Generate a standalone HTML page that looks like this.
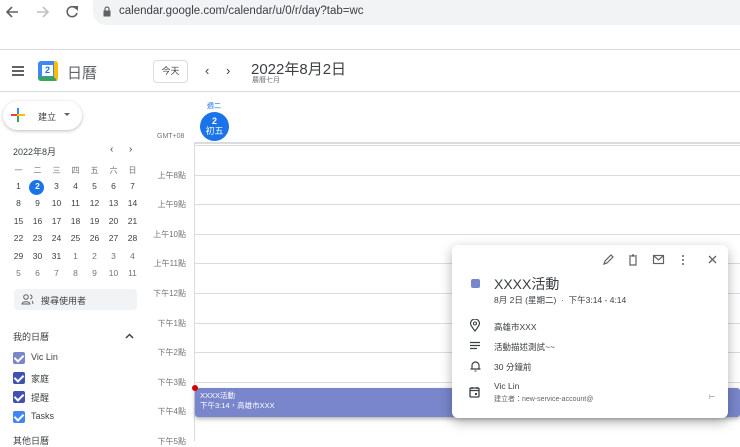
<!DOCTYPE html>
<html><head><meta charset="utf-8"><style>
*{margin:0;padding:0;box-sizing:border-box}
body{width:740px;height:441px;overflow:hidden;background:#fff;font-family:"Liberation Sans","Noto Sans CJK TC",sans-serif;color:#3c4043;position:relative}
.a{position:absolute;white-space:nowrap}
.hl{position:absolute;left:195px;right:0;height:1px;background:#dadce0}
.tl{position:absolute;width:36px;left:150px;text-align:right;font-size:8px;color:#70757a}
.mc{position:absolute;width:19px;text-align:center;font-size:8.5px;color:#3c4043}
.cb{position:absolute;left:13px;width:12px;height:12px;border-radius:2px}
.cb:after{content:"";position:absolute;left:3px;top:1px;width:4px;height:7px;border:solid #fff;border-width:0 2px 2px 0;transform:rotate(45deg)}
</style></head><body>
<!-- browser bar -->
<div class="a" style="left:0;top:0;width:740px;height:50px;background:#fff;border-bottom:1px solid #dadce0"></div>
<svg class="a" style="left:4px;top:4px" width="80" height="16" viewBox="0 0 80 16"><path d="M14 8H3M8 3L3 8l5 5" stroke="#5f6368" stroke-width="1.6" fill="none"/><path d="M33 8h11M39 3l5 5-5 5" stroke="#bdc1c6" stroke-width="1.6" fill="none"/><path d="M72 4.5A5 5 0 1 0 73 9" stroke="#5f6368" stroke-width="1.6" fill="none"/><path d="M69 2h5v5z" fill="#5f6368"/></svg>
<div class="a" style="left:93px;top:0;width:660px;height:25px;background:#f1f3f4;border-radius:0 0 0 13px"></div>
<svg class="a" style="left:103px;top:6px" width="8" height="11"><rect x="0.5" y="4.5" width="7" height="6" fill="#5f6368"/><path d="M2 5V3a2 2 0 0 1 4 0v2" stroke="#5f6368" fill="none" stroke-width="1.2"/></svg>
<div class="a" style="left:119px;top:5px;font-size:11.5px;color:#3c4043">calendar.google.com/calendar/u/0/r/day?tab=wc</div>
<!-- header -->
<div class="a" style="left:0;top:91px;width:740px;height:1px;background:#dadce0"></div>
<div class="a" style="left:12px;top:66px;width:12px;height:1.5px;background:#5f6368;box-shadow:0 4px 0 #5f6368,0 8px 0 #5f6368"></div>
<div class="a" style="left:38px;top:61px;width:20px;height:20px;border-radius:3px;background:#4285f4;border-right:4px solid #fbbc04;border-bottom:4px solid #34a853"></div>
<div class="a" style="left:42px;top:65px;width:11px;height:11px;background:#fff;font-size:9px;color:#1a73e8;text-align:center;line-height:11px;font-weight:bold">2</div>
<div class="a" style="left:67px;top:62px;font-size:15px;color:#5f6368">日曆</div>
<div class="a" style="left:153px;top:60px;width:35px;height:23px;border:1px solid #dadce0;border-radius:4px;font-size:9px;text-align:center;line-height:21px">今天</div>
<div class="a" style="left:205px;top:63px;font-size:13px;color:#3c4043">‹</div>
<div class="a" style="left:226px;top:63px;font-size:13px;color:#3c4043">›</div>
<div class="a" style="left:251px;top:58px;font-size:15px;color:#3c4043">2022年8月2日</div>
<div class="a" style="left:252px;top:75px;font-size:7px;color:#70757a">農曆七月</div>
<!-- create -->
<div class="a" style="left:3px;top:101px;width:79px;height:29px;border-radius:15px;background:#fff;box-shadow:0 1px 3px rgba(60,64,67,.35)"></div>
<div class="a" style="left:11px;top:114px;width:14px;height:2px;background:#ea4335"></div>
<div class="a" style="left:17px;top:108px;width:2px;height:14px;background:#4285f4"></div>
<div class="a" style="left:17px;top:114px;width:8px;height:2px;background:#fbbc04"></div>
<div class="a" style="left:17px;top:116px;width:2px;height:6px;background:#34a853"></div>
<div class="a" style="left:38px;top:110px;font-size:9px">建立</div>
<div class="a" style="left:64px;top:113px;border:3px solid transparent;border-top:3.5px solid #5f6368"></div>
<!-- mini cal -->
<div class="a" style="left:13px;top:145px;font-size:9px">2022年8月</div>
<div class="a" style="left:110px;top:144px;font-size:10px">‹</div>
<div class="a" style="left:129px;top:144px;font-size:10px">›</div>
<div class="a" style="left:29px;top:180px;width:15px;height:15px;border-radius:50%;background:#1a73e8"></div>
<div id="mini"></div>
<!-- search -->
<div class="a" style="left:14px;top:289px;width:123px;height:21px;background:#f1f3f4;border-radius:4px"></div>
<svg class="a" style="left:21px;top:294px" width="13" height="11"><circle cx="5" cy="3" r="2.3" stroke="#5f6368" fill="none"/><path d="M1 10c0-3 8-3 8 0z" stroke="#5f6368" fill="none"/><path d="M9 1a2 2 0 0 1 0 4M11 7c1 1 1 2 1 3" stroke="#5f6368" fill="none"/></svg>
<div class="a" style="left:41px;top:294px;font-size:9px">搜尋使用者</div>
<div class="a" style="left:13px;top:330px;font-size:9px">我的日曆</div>
<svg class="a" style="left:125px;top:333px" width="9" height="6"><path d="M1 5l3.5-3.5L8 5" stroke="#3c4043" stroke-width="1.5" fill="none"/></svg>
<div class="cb" style="top:352px;background:#7986cb"></div><div class="a" style="left:31px;top:352px;font-size:9px">Vic Lin</div>
<div class="cb" style="top:372px;background:#3f51b5"></div><div class="a" style="left:31px;top:372px;font-size:9px">家庭</div>
<div class="cb" style="top:391px;background:#3f51b5"></div><div class="a" style="left:31px;top:391px;font-size:9px">提醒</div>
<div class="cb" style="top:411px;background:#4285f4"></div><div class="a" style="left:31px;top:411px;font-size:9px">Tasks</div>
<div class="a" style="left:13px;top:434px;font-size:9px">其他日曆</div>
<!-- day header -->
<div class="a" style="left:207px;top:101px;font-size:7px;color:#1a73e8">週二</div>
<div class="a" style="left:200px;top:112px;width:29px;height:29px;border-radius:50%;background:#1a73e8;color:#fff;text-align:center;font-size:9px;line-height:10px;padding-top:4px"><b>2</b><br>初五</div>
<div class="a" style="left:157px;top:133px;font-size:7px;color:#70757a">GMT+08</div>
<div class="a" style="left:194px;top:142px;width:546px;height:2px;background:#dadce0"></div>
<div class="a" style="left:194px;top:144px;width:1px;height:297px;background:#dadce0"></div>
<div id="grid"></div>
<!-- event -->
<div class="a" style="left:195px;top:388px;width:545px;height:29px;background:#7986cb;border-radius:3px;box-shadow:0 2px 4px rgba(0,0,0,.3)"></div>
<div class="a" style="left:192px;top:385px;width:6px;height:6px;border-radius:50%;background:#d50000"></div>
<div class="a" style="left:200px;top:390px;font-size:7.5px;color:#fff">XXXX活動</div>
<div class="a" style="left:200px;top:400px;font-size:7.5px;color:#fff">下午3:14，高雄市XXX</div>
<!-- popup -->
<div class="a" style="left:452px;top:245px;width:276px;height:173px;background:#fff;border-radius:6px;box-shadow:0 4px 12px rgba(0,0,0,.3)"></div>
<svg class="a" style="left:602px;top:253px" width="120" height="14" viewBox="0 0 120 14"><path d="M2 11l1-3 6-6 2 2-6 6z" stroke="#5f6368" fill="none" stroke-width="1.2"/><path d="M27 3h8M30 2h2M28 4v8h6V4" stroke="#5f6368" fill="none" stroke-width="1.2"/><rect x="51.5" y="2.5" width="10" height="8" stroke="#5f6368" fill="none" stroke-width="1.2"/><path d="M52 3l4.5 4L61 3" stroke="#5f6368" fill="none" stroke-width="1.2"/><circle cx="81" cy="3" r="1" fill="#5f6368"/><circle cx="81" cy="7" r="1" fill="#5f6368"/><circle cx="81" cy="11" r="1" fill="#5f6368"/><path d="M107 3l7 7M114 3l-7 7" stroke="#5f6368" stroke-width="1.3"/></svg>
<div class="a" style="left:471px;top:279px;width:9px;height:9px;border-radius:2px;background:#7986cb"></div>
<div class="a" style="left:494px;top:274px;font-size:14px;color:#3c4043">XXXX活動</div>
<div class="a" style="left:494px;top:294px;font-size:8.5px">8月 2日 (星期二)&nbsp; · &nbsp;下午3:14 - 4:14</div>
<svg class="a" style="left:469px;top:319px" width="12" height="13"><path d="M6 12C2 7 1.5 5.5 1.5 4.5a4.5 4.5 0 0 1 9 0C10.5 5.5 10 7 6 12z" stroke="#3c4043" fill="none" stroke-width="1.2"/><circle cx="6" cy="4.5" r="1.5" stroke="#3c4043" fill="none"/></svg>
<div class="a" style="left:494px;top:321px;font-size:8.5px">高雄市XXX</div>
<svg class="a" style="left:469px;top:341px" width="12" height="10"><path d="M1 1.5h10M1 4.5h10M1 7.5h7" stroke="#3c4043" stroke-width="1.2"/></svg>
<div class="a" style="left:494px;top:341px;font-size:8.5px">活動描述測試~~</div>
<svg class="a" style="left:470px;top:360px" width="11" height="12"><path d="M2 9V5.5a3.5 3.5 0 0 1 7 0V9h1.5H.5z" stroke="#3c4043" fill="none" stroke-width="1.2"/><path d="M4.5 11h2" stroke="#3c4043"/></svg>
<div class="a" style="left:494px;top:361px;font-size:8.5px">30 分鐘前</div>
<svg class="a" style="left:469px;top:386px" width="11" height="12"><rect x="1" y="2" width="9" height="9" rx="1" stroke="#3c4043" fill="none" stroke-width="1.3"/><path d="M1 4.5h9M3 1v2M8 1v2" stroke="#3c4043" stroke-width="1.2"/><rect x="6" y="7" width="2" height="2" fill="#3c4043"/></svg>
<div class="a" style="left:494px;top:381px;font-size:8.5px">Vic Lin</div>
<div class="a" style="left:494px;top:394px;font-size:7px;color:#5f6368">建立者：new-service-account@&#8203;</div>
<div class="a" style="left:709px;top:393px;font-size:7px;color:#5f6368">⊢</div>
<script>
var g='';
for(var i=0;i<10;i++){var y=145+i*29.6;g+='<div class="hl" style="top:'+y+'px"></div>';}
var L=['上午7點','上午8點','上午9點','上午10點','上午11點','下午12點','下午1點','下午2點','下午3點','下午4點','下午5點'];
for(var i=1;i<L.length;i++){g+='<div class="tl" style="top:'+(145+i*29.6-5)+'px">'+L[i]+'</div>';}
document.getElementById('grid').innerHTML=g;
var m='',cols=[18,37,56,75,94,113,132];
var h=['一','二','三','四','五','六','日'];
for(var c=0;c<7;c++)m+='<div class="mc" style="left:'+(cols[c]-9)+'px;top:165px;color:#70757a;font-size:8px">'+h[c]+'</div>';
var d=1;
for(var r=0;r<6;r++)for(var c=0;c<7;c++){var n=r*7+c+1,t,col='#3c4043';
if(n<=31)t=n;else{t=n-31;col='#70757a';}
var st=(n==2)?'color:#fff;font-weight:bold':'color:'+col;
m+='<div class="mc" style="left:'+(cols[c]-9)+'px;top:'+(181+r*17.4)+'px;'+st+'">'+t+'</div>';}
document.getElementById('mini').innerHTML=m;
</script>
</body></html>
